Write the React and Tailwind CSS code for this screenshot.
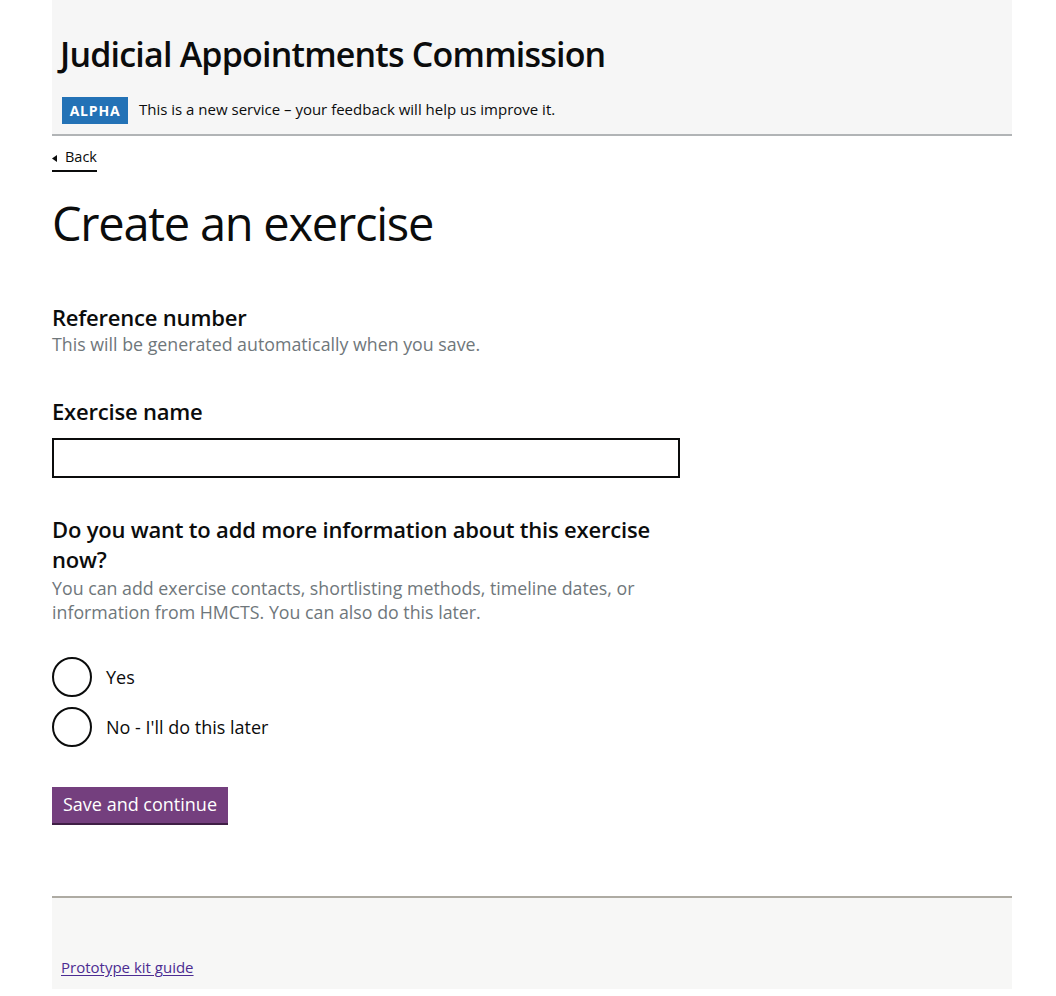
import React from "react";

const font = { fontFamily: '"Open Sans", "Noto Sans", sans-serif' };

function Radio({ label }) {
  return (
    <label className="flex items-center gap-[14px] h-[40px]">
      <span className="block w-[40px] h-[40px] rounded-full border-2 border-[#0b0c0c] bg-white shrink-0" />
      <span className="text-[18px] leading-[24px] text-[#0b0c0c]">{label}</span>
    </label>
  );
}

export default function App() {
  return (
    <div className="min-h-[996px] bg-white text-[#0b0c0c]" style={font}>
      <div className="ml-[52px] w-[960px]">
        {/* Header */}
        <header className="bg-[#f6f6f6] border-b-2 border-[#b1b4b6] h-[136px] px-[8px] pt-[34px]">
          <div className="text-[34px] leading-[40px] font-semibold tracking-[-0.8px]">
            Judicial Appointments Commission
          </div>
          <div className="mt-[23px] flex items-center">
            <span className="bg-[#2372b6] text-white text-[14px] font-bold tracking-[0.8px] h-[27px] w-[66px] ml-[2px] flex items-center justify-center">
              ALPHA
            </span>
            <span className="ml-[11px] text-[15px] leading-[20px] -mt-[4px]">
              This is a new service – your feedback will help us improve it.
            </span>
          </div>
        </header>

        {/* Back link */}
        <div className="mt-[8px] h-[26px]">
          <a className="inline-flex items-center border-b-2 border-[#0b0c0c] h-[26px] pb-[2px]">
            <svg width="5" height="7" viewBox="0 0 5 7" className="mt-[4px]">
              <polygon points="5,0 0,3.5 5,7" fill="#0b0c0c" />
            </svg>
            <span className="ml-[8px] text-[14.5px] leading-[20px]">Back</span>
          </a>
        </div>

        {/* Heading */}
        <h1 className="mt-[27px] text-[47px] leading-[52px] font-normal tracking-[-1.25px]">Create an exercise</h1>

        {/* Reference number */}
        <div className="mt-[53px]">
          <div className="text-[22px] leading-[30px] font-semibold tracking-[-0.2px]">Reference number</div>
          <div className="text-[17.8px] leading-[24px] text-[#6f777b]">
            This will be generated automatically when you save.
          </div>
        </div>

        {/* Exercise name */}
        <div className="mt-[40px]">
          <div className="text-[22px] leading-[30px] font-semibold tracking-[-0.2px]">Exercise name</div>
          <div className="mt-[12px] w-[628px] h-[40px] border-2 border-[#0b0c0c] bg-white" />
        </div>

        {/* Question */}
        <div className="mt-[36px] w-[640px]">
          <div className="text-[22px] leading-[30px] font-semibold tracking-[-0.2px]">
            Do you want to add more information about this exercise now?
          </div>
          <div className="mt-[2px] text-[17.8px] leading-[24px] text-[#6f777b]">
            You can add exercise contacts, shortlisting methods, timeline dates, or information from HMCTS. You can also do this later.
          </div>
        </div>

        <div className="mt-[33px] flex flex-col gap-[10px]">
          <Radio label="Yes" />
          <Radio label="No - I'll do this later" />
        </div>

        <button className="mt-[40px] h-[36px] w-[176px] bg-[#743f7e] shadow-[0_2px_0_#3f1f45] text-white text-[18px] leading-[24px] flex items-center justify-center pb-[2px]">
          Save and continue
        </button>

        {/* Footer */}
        <footer className="mt-[73px] border-t-2 border-[#aeaba3] bg-[#f7f7f6] h-[93px] px-[9px] pt-[57px]">
          <a className="text-[15px] leading-[20px] text-[#4c2c92] underline underline-offset-2">
            Prototype kit guide
          </a>
        </footer>
      </div>
    </div>
  );
}
